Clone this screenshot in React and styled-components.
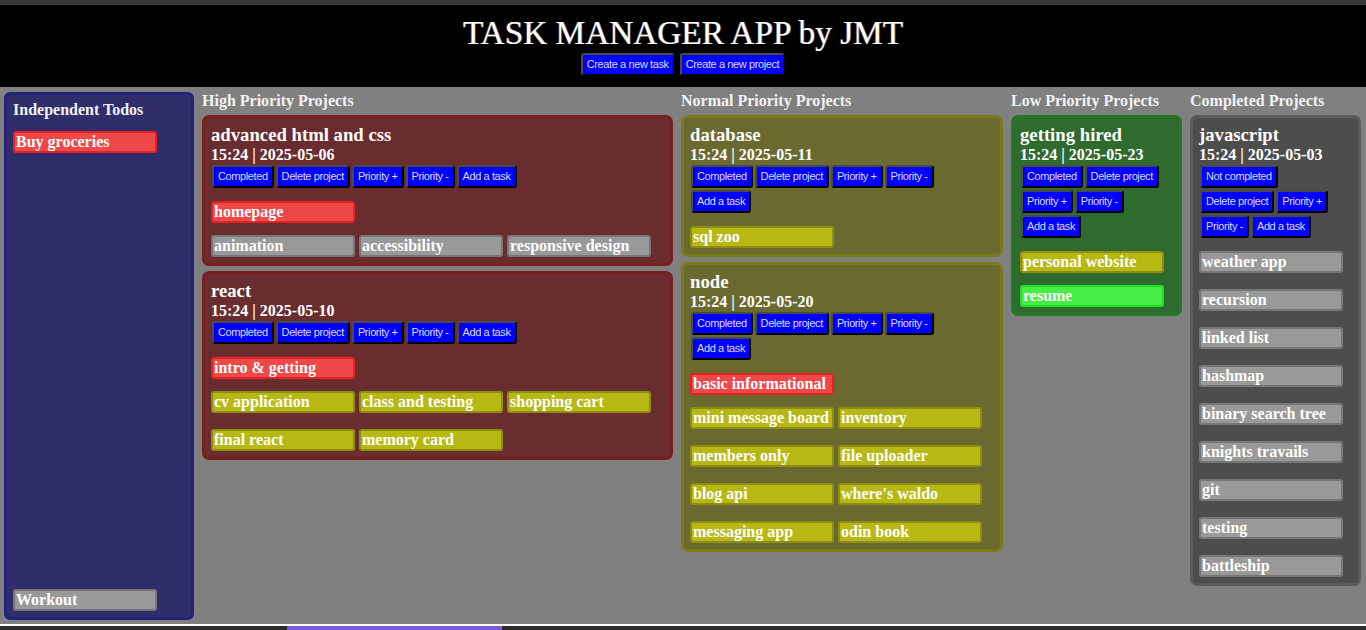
import styled, { createGlobalStyle, css } from "styled-components";

const GlobalStyle = createGlobalStyle`
  html, body {
    margin: 0;
    padding: 0;
    background: #808080;
  }
  * {
    box-sizing: border-box;
  }
`;

const independentTodos = [
  { title: "Buy groceries", priority: "high" },
  { title: "Workout", priority: "done" },
];

const columns = [
  {
    heading: "High Priority Projects",
    kind: "high",
    projects: [
      {
        name: "advanced html and css",
        date: "2025-05-06",
        tasks: [
          { title: "homepage", priority: "high" },
          { title: "animation", priority: "done" },
          { title: "accessibility", priority: "done" },
          { title: "responsive design", priority: "done" },
        ],
      },
      {
        name: "react",
        date: "2025-05-10",
        tasks: [
          { title: "intro & getting", priority: "high" },
          { title: "cv application", priority: "normal" },
          { title: "class and testing", priority: "normal" },
          { title: "shopping cart", priority: "normal" },
          { title: "final react", priority: "normal" },
          { title: "memory card", priority: "normal" },
        ],
      },
    ],
  },
  {
    heading: "Normal Priority Projects",
    kind: "normal",
    projects: [
      {
        name: "database",
        date: "2025-05-11",
        tasks: [{ title: "sql zoo", priority: "normal" }],
      },
      {
        name: "node",
        date: "2025-05-20",
        tasks: [
          { title: "basic informational", priority: "high" },
          { title: "mini message board", priority: "normal" },
          { title: "inventory", priority: "normal" },
          { title: "members only", priority: "normal" },
          { title: "file uploader", priority: "normal" },
          { title: "blog api", priority: "normal" },
          { title: "where's waldo", priority: "normal" },
          { title: "messaging app", priority: "normal" },
          { title: "odin book", priority: "normal" },
        ],
      },
    ],
  },
  {
    heading: "Low Priority Projects",
    kind: "low",
    projects: [
      {
        name: "getting hired",
        date: "2025-05-23",
        tasks: [
          { title: "personal website", priority: "normal" },
          { title: "resume", priority: "low" },
        ],
      },
    ],
  },
  {
    heading: "Completed Projects",
    kind: "completed",
    projects: [
      {
        name: "javascript",
        date: "2025-05-03",
        completed: true,
        tasks: [
          "weather app",
          "recursion",
          "linked list",
          "hashmap",
          "binary search tree",
          "knights travails",
          "git",
          "testing",
          "battleship",
        ].map((title) => ({ title, priority: "done" })),
      },
    ],
  },
];

const cardColors = {
  high: { bg: "#6a2d2f", border: "#7a1f1f" },
  normal: { bg: "#6a6a30", border: "#7b7b1a" },
  low: { bg: "#2f6a2f", border: "#237a23" },
  completed: { bg: "#4d4d4d", border: "#5b5b5b" },
};

const chipColors = {
  high: { bg: "#ee4848", border: "#e42020" },
  normal: { bg: "#b8b814", border: "#8e8e12" },
  low: { bg: "#44ee44", border: "#22dd22" },
  done: { bg: "#999999", border: "#777777" },
};

const groupOrder = ["high", "normal", "low", "done"];

const TopStrip = styled.div`
  height: 5px;
  background: #3a3a3a;
`;

const Header = styled.header`
  height: 82px;
  background: #000;
  padding-top: 9px;
  text-align: center;
`;

const Title = styled.h1`
  margin: 0;
  font-family: "Liberation Serif", "Times New Roman", serif;
  font-weight: normal;
  font-size: 33.3px;
  line-height: 38px;
  color: #fff;
  text-shadow: -1px 0 rgba(190, 110, 50, 0.45), 1px 0 rgba(130, 180, 255, 0.45);
`;

const HeaderActions = styled.div`
  display: flex;
  justify-content: center;
  gap: 5px;
  margin-top: 1px;
`;

const Button = styled.button`
  font-family: "Liberation Sans", Arial, sans-serif;
  font-size: 11px;
  letter-spacing: -0.4px;
  line-height: 15px;
  padding: 2px 4px;
  margin: ${(p) => (p.$header ? "0" : "1px")};
  background: #0000ff;
  color: #dcdcff;
  border: 2px solid;
  border-color: #4a4a4a #000 #000 #4a4a4a;
  border-radius: 3px;
  cursor: pointer;
`;

const Main = styled.main`
  height: 537px;
  padding: 5px 4px 4px;
  display: grid;
  grid-template-columns: 190px 471px 322px 171px 171px;
  column-gap: 8px;
  align-items: stretch;
`;

const TodoPanel = styled.section`
  display: flex;
  flex-direction: column;
  justify-content: space-between;
  background: #2f2d6a;
  border: 3px solid #25227c;
  border-radius: 6px;
  padding: 6px;
`;

const Heading = styled.h2`
  margin: 0;
  font-family: "Liberation Serif", "Times New Roman", serif;
  font-weight: bold;
  font-size: 16px;
  line-height: 18px;
  color: #f2f2f2;
`;

const Column = styled.section`
  display: flex;
  flex-direction: column;
  gap: 5px;
`;

const Card = styled.article`
  background: ${(p) => cardColors[p.$kind].bg};
  border: 3px solid ${(p) => cardColors[p.$kind].border};
  border-radius: 7px;
  padding: 6px;
  font-family: "Liberation Serif", "Times New Roman", serif;
  color: #fff;
`;

const ProjectName = styled.h3`
  margin: 0;
  font-size: 18.72px;
  line-height: 22px;
  font-weight: bold;
`;

const ProjectDate = styled.div`
  font-size: 16px;
  line-height: 18px;
  font-weight: bold;
`;

const Actions = styled.div`
  display: flex;
  flex-wrap: wrap;
`;

const TaskList = styled.div`
  display: flex;
  flex-direction: column;
  gap: 12px;
  ${(p) =>
    p.$spaced &&
    css`
      margin-top: 12px;
    `}
`;

const TaskGroup = styled.div`
  display: flex;
  flex-wrap: wrap;
  gap: 16px 4px;
`;

const Chip = styled.div`
  width: 144px;
  height: 22px;
  padding: 0 1px;
  background: ${(p) => chipColors[p.$priority].bg};
  border: 2px solid ${(p) => chipColors[p.$priority].border};
  border-radius: 3px;
  font-family: "Liberation Serif", "Times New Roman", serif;
  font-weight: bold;
  font-size: 16px;
  line-height: 18px;
  color: #fff;
  white-space: nowrap;
  overflow: hidden;
`;

const Footer = styled.footer`
  height: 6px;
  border-top: 2px solid #fff;
  background: #2b2b2b;
  display: flex;
  padding-left: 287px;
`;

const FooterTab = styled.div`
  width: 215px;
  background: #7c5ad8;
`;

function groupTasks(tasks) {
  return groupOrder
    .map((priority) => tasks.filter((t) => t.priority === priority))
    .filter((group) => group.length > 0);
}

function Tasks({ tasks, spaced }) {
  return (
    <TaskList $spaced={spaced}>
      {groupTasks(tasks).map((group) => (
        <TaskGroup key={group[0].priority}>
          {group.map((t) => (
            <Chip key={t.title} $priority={t.priority}>
              {t.title}
            </Chip>
          ))}
        </TaskGroup>
      ))}
    </TaskList>
  );
}

function ProjectCard({ project, kind }) {
  return (
    <Card $kind={kind}>
      <ProjectName>{project.name}</ProjectName>
      <ProjectDate>15:24 | {project.date}</ProjectDate>
      <Actions>
        <Button>{project.completed ? "Not completed" : "Completed"}</Button>
        <Button>Delete project</Button>
        <Button>Priority +</Button>
        <Button>Priority -</Button>
        <Button>Add a task</Button>
      </Actions>
      <Tasks tasks={project.tasks} spaced />
    </Card>
  );
}

export default function App() {
  return (
    <>
      <GlobalStyle />
      <TopStrip />
      <Header>
        <Title>TASK MANAGER APP by JMT</Title>
        <HeaderActions>
          <Button $header>Create a new task</Button>
          <Button $header>Create a new project</Button>
        </HeaderActions>
      </Header>
      <Main>
        <TodoPanel>
          <TaskList>
            <Heading>Independent Todos</Heading>
            <TaskGroup>
              {independentTodos
                .filter((t) => t.priority !== "done")
                .map((t) => (
                  <Chip key={t.title} $priority={t.priority}>
                    {t.title}
                  </Chip>
                ))}
            </TaskGroup>
          </TaskList>
          <TaskGroup>
            {independentTodos
              .filter((t) => t.priority === "done")
              .map((t) => (
                <Chip key={t.title} $priority={t.priority}>
                  {t.title}
                </Chip>
              ))}
          </TaskGroup>
        </TodoPanel>
        {columns.map((col) => (
          <Column key={col.heading}>
            <Heading>{col.heading}</Heading>
            {col.projects.map((p) => (
              <ProjectCard key={p.name} project={p} kind={col.kind} />
            ))}
          </Column>
        ))}
      </Main>
      <Footer>
        <FooterTab />
      </Footer>
    </>
  );
}
